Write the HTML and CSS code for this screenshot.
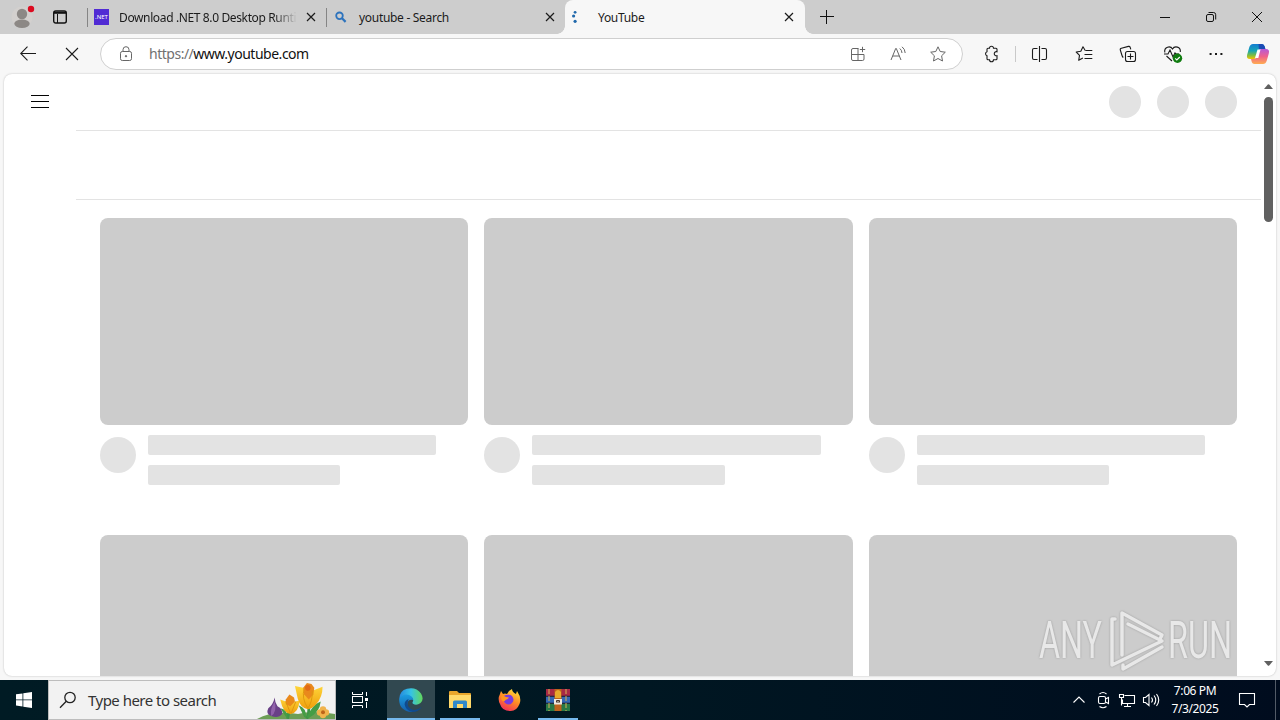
FILE: index.html
```html
<!doctype html>
<html lang="en">
  <head>
    <meta charset="UTF-8" />
    <meta name="viewport" content="width=device-width, initial-scale=1.0" />
    <title>YouTube</title>
    <link rel="stylesheet" href="styles.css">
  </head>
  <body>
    <div class="desktop">
      <header class="tabbar">
        <div class="profile">
          <svg width="44" height="34" viewBox="0 0 44 34">
            <circle cx="22" cy="17" r="10.5" fill="#d3d0ce" />
            <circle cx="22" cy="14" r="5.2" fill="#8c8885" />
            <ellipse cx="22" cy="23.8" rx="7.7" ry="4.2" fill="#8c8885" />
            <circle cx="31" cy="9" r="3.2" fill="#dc0b20" />
          </svg>
        </div>
        <div class="tab-actions">
          <svg width="16" height="16" viewBox="0 0 16 16" fill="none" stroke="#111" stroke-width="1.4">
            <rect x="1.7" y="2" width="12.6" height="12" rx="2" />
            <path d="M2 3.8h12" stroke-width="2" />
            <path d="M5.5 5v9" stroke-width="1" />
          </svg>
        </div>
        <div class="tab first">
          <div class="net-icon">.NET</div>
          <span class="tab-title fade">Download .NET 8.0 Desktop Runti</span>
          <svg class="close" viewBox="0 0 10 10"><path d="M1 1l8 8M9 1l-8 8" /></svg>
        </div>
        <div class="tab second">
          <svg class="favicon" viewBox="0 0 16 16" fill="none" stroke="#2d73bd" stroke-width="1.8">
            <circle cx="6.5" cy="6.8" r="3.3" />
            <path d="M9 9.300l3.600 3.600" stroke-width="2.2" />
          </svg>
          <span class="tab-title">youtube - Search</span>
          <svg class="close" viewBox="0 0 10 10"><path d="M1 1l8 8M9 1l-8 8" /></svg>
        </div>
        <div class="tab active">
          <svg class="favicon" viewBox="0 0 16 16" fill="#2169ac">
            <circle cx="4.1" cy="3.3" r="1.4" />
            <circle cx="2.6" cy="7" r="1.6" />
            <circle cx="4.1" cy="12.3" r="1.6" />
          </svg>
          <span class="tab-title">YouTube</span>
          <svg class="close" viewBox="0 0 10 10"><path d="M1 1l8 8M9 1l-8 8" /></svg>
        </div>
        <div class="new-tab">
          <svg width="14" height="14" viewBox="0 0 14 14" stroke="#111" stroke-width="1"><path d="M6.500 0v14M0 6.500h14" /></svg>
        </div>
        <div class="window-controls">
          <svg viewBox="0 0 46 34"><path d="M18 17.5h10" /></svg>
          <svg viewBox="0 0 46 34">
            <rect x="18.5" y="14.5" width="7" height="7" rx="1.5" />
            <path d="M20.500 12.500h5a2.200 2.200 0 0 1 2.200 2.200v4.800" />
          </svg>
          <svg viewBox="0 0 46 34"><path d="M18 12l10 10M28 12l-10 10" /></svg>
        </div>
      </header>

      <div class="toolbar">
        <div class="tool"><svg width="16" height="16" viewBox="0 0 16 16"><path d="M16 7.500H.8M7.500 .7L.7 7.500l6.800 6.800" /></svg></div>
        <div class="tool"><svg width="14" height="14" viewBox="0 0 14 14"><path d="M1 1l12 12M13 1L1 13" /></svg></div>
        <div class="address">
          <svg class="lock" width="14" height="16" viewBox="0 0 14 16">
            <rect x="1.5" y="5.5" width="11" height="9" rx="1.8" />
            <path d="M4 5.500V3.700a3 3 0 0 1 6 0v1.800" />
            <circle cx="7" cy="10.2" r=".7" fill="#555" />
          </svg>
          <span class="url"><span class="scheme">https://</span>www.youtube.com</span>
          <div class="address-icon">
            <svg width="16" height="16" viewBox="0 0 16 16">
              <path d="M8.500 2.500H3A1.500 1.500 0 0 0 1.500 4v9A1.500 1.500 0 0 0 3 14.500h9.500A1.500 1.500 0 0 0 14 13V8.500H1.500M8 2.500v12M12.500.8v5.400M9.800 3.500h5.400" />
            </svg>
          </div>
          <div class="address-icon">
            <svg width="16" height="16" viewBox="0 0 16 16">
              <path d="M1 14L5.700 2.500h.6L11 14M2.800 10h6.500M9.800 2.500q2 1.500 2.200 4.500M12 .8q3 2.200 3.200 6.200" />
            </svg>
          </div>
          <div class="address-icon">
            <svg width="18" height="18" viewBox="0 0 18 18">
              <path d="M9 1.800l2.200 4.700 5.100.7-3.700 3.600.9 5.200L9 13.500 4.500 16l.9-5.200L1.700 7.200l5.100-.7z" stroke-linejoin="round" />
            </svg>
          </div>
        </div>
        <div class="tool extensions">
          <svg width="18" height="18" viewBox="0 0 18 18">
            <path d="M5.500 3.500H7a2 2 0 0 1 4 0h2.500q1 0 1 1V7a2.100 2.100 0 1 0 0 4v3q0 1-1 1H11a2 2 0 0 1-4 0H5.500q-1 0-1-1v-3a2.100 2.100 0 0 1 0-4V4.500q0-1 1-1z" transform="translate(-.5 -.3)" />
          </svg>
        </div>
        <div class="divider"></div>
        <div class="tool">
          <svg width="18" height="18" viewBox="0 0 18 18">
            <path d="M6.500 3.500H3Q1.500 3.500 1.500 5v8q0 1.500 1.500 1.500h3.500M10.500 3.500H14q1.500 0 1.500 1.500v8q0 1.500-1.500 1.500h-3.500M8.500 1v16" />
          </svg>
        </div>
        <div class="tool">
          <svg width="18" height="18" viewBox="0 0 18 18">
            <path d="M10.200 5.500L8 1.800 5.800 6.300 1.200 7l3.300 3.300-.8 5 4.200-2.200M10.500 5.500h6.800M9.500 9.500h7.800M9.500 13.500h7.800" stroke-linejoin="round" />
          </svg>
        </div>
        <div class="tool">
          <svg width="18" height="18" viewBox="0 0 18 18">
            <path d="M4.300 12.500Q3.500 12 3 10.500L1.300 5Q.9 3.600 2.400 3.200l7-1.800q1.400-.3 1.800 1l.6 2" />
            <rect x="6.500" y="6.500" width="10" height="10" rx="2" />
            <path d="M11.500 8.500v6M8.500 11.500h6" />
          </svg>
        </div>
        <div class="tool health">
          <svg width="20" height="20" viewBox="0 0 20 20">
            <path d="M1.800 8.500C.8 2.500 7.500 1.500 9.500 5c2-3.500 8.500-2.500 7.800 3M3.500 12l5.500 5M1 10h4l2-4 3 7 2-4 1 1h3" />
            <circle cx="14.5" cy="14.3" r="4.7" fill="#107c10" stroke="none" />
            <path d="M12.200 14.400l1.600 1.600 3-3" stroke="#fff" />
          </svg>
        </div>
        <div class="tool">
          <svg width="16" height="16" viewBox="0 0 16 16"><path d="M1.600 8h2M7 8h2M12.400 8h2" stroke-width="2" /></svg>
        </div>
        <div class="tool copilot">
          <svg width="24" height="22" viewBox="0 0 24 22">
            <defs>
              <linearGradient id="cool" x1="0" y1="0" x2="0" y2="1">
                <stop offset="0" stop-color="#147bd1" />
                <stop offset=".45" stop-color="#16a6b5" />
                <stop offset=".75" stop-color="#7cbd42" />
                <stop offset="1" stop-color="#f5c400" />
              </linearGradient>
              <linearGradient id="warm" x1="0" y1="0" x2="0" y2="1">
                <stop offset="0" stop-color="#b55ad8" />
                <stop offset=".5" stop-color="#f0628c" />
                <stop offset="1" stop-color="#ffad50" />
              </linearGradient>
            </defs>
            <path d="M7 1h9q2 0 2.700 2.500L19 6h-4q-2 0-2.600 2L10.500 14Q9.800 16 8 16H4Q0 16 1.200 11.500l2-7Q4.200 1 7 1z" fill="url(#cool)" stroke="none" />
            <path d="M12.500 1H16q2 0 2.700 2.500L19.500 6H15q-1.400 0-2 1z" fill="#1b4bb4" stroke="none" />
            <path d="M17 21H8.500Q6 21 5.500 18L5 16h3q2 0 2.600-2L12.500 8q.6-2 2.500-2h5q4 0 2.800 4.500l-2 7Q19.800 21 17 21z" fill="url(#warm)" stroke="none" />
            <path d="M11.500 6.500h3L12.300 15H9z" fill="#fff" stroke="none" />
          </svg>
        </div>
      </div>

      <main class="page">
        <div class="content">
          <div class="masthead">
            <svg width="18" height="14" viewBox="0 0 18 14" stroke="#030303" stroke-width="1"><path d="M0 .5h18M0 6.500h18M0 12.500h18" /></svg>
            <div class="masthead-buttons">
              <div class="circle"></div>
              <div class="circle"></div>
              <div class="circle"></div>
            </div>
          </div>
          <div class="chips"></div>
          <div class="grid">
            <div class="video">
              <div class="thumbnail"></div>
              <div class="details">
                <div class="avatar"></div>
                <div class="lines"><div class="line"></div><div class="line short"></div></div>
              </div>
            </div>
            <div class="video">
              <div class="thumbnail"></div>
              <div class="details">
                <div class="avatar"></div>
                <div class="lines"><div class="line"></div><div class="line short"></div></div>
              </div>
            </div>
            <div class="video">
              <div class="thumbnail"></div>
              <div class="details">
                <div class="avatar"></div>
                <div class="lines"><div class="line"></div><div class="line short"></div></div>
              </div>
            </div>
            <div class="video"><div class="thumbnail"></div></div>
            <div class="video"><div class="thumbnail"></div></div>
            <div class="video"><div class="thumbnail"></div></div>
          </div>
        </div>
        <div class="scrollbar">
          <svg width="9" height="5" viewBox="0 0 9 5"><path d="M0 5l3.800-4.500q.7-.7 1.400 0L9 5z" fill="#606060" /></svg>
          <div class="thumb"></div>
          <svg class="down" width="9" height="5" viewBox="0 0 9 5"><path d="M0 0h9L5.200 4.500q-.7.700-1.400 0z" fill="#606060" /></svg>
        </div>
      </main>

      <footer class="taskbar">
        <div class="start">
          <svg width="16" height="16" viewBox="0 0 16 16" fill="#fff">
            <path d="M0 2.300l6.500-.9v6.100H0zM7.300 1.200L16 0v7.500H7.300zM0 8.300h6.500v6.200L0 13.600zM7.300 8.300H16V16l-8.700-1.300z" />
          </svg>
        </div>
        <div class="search">
          <svg width="18" height="18" viewBox="0 0 18 18" fill="none" stroke="#222" stroke-width="1.3">
            <circle cx="11" cy="6.5" r="5.2" />
            <path d="M7.300 10.300L1 16.700" />
          </svg>
          <span>Type here to search</span>
          <svg class="flowers" width="80" height="38" viewBox="0 0 80 38">
            <defs>
              <linearGradient id="petal" x1="0" y1="0" x2="0" y2="1">
                <stop offset="0" stop-color="#ffd83b" />
                <stop offset="1" stop-color="#ef9e0c" />
              </linearGradient>
            </defs>
            <path d="M2 38Q18 29 43 33Q57 29 80 33v5z" fill="#6c9e55" />
            <g transform="translate(5 1) scale(.92 .97)">
              <path d="M30 38Q33 28 28 22M51 38Q55 27 52 17" fill="none" stroke="#3f9547" stroke-width="3" />
              <path d="M51 36Q57 23 66 20Q65 31 53 37M48 36L42 24q9 3 8 13M29 37l-7-10q8 1 8 10" fill="#459d46" />
              <path d="M16 16q-2 8-7 11-3 6 3 8 8 3 12-2 1-5-5-8-3-4-3-9z" fill="#694087" />
              <path d="M16 20q-5 7-4 15 7-4 4-15l3 14" fill="#9061aa" />
              <path d="M22 18l6 2 4-4 4 5 7-2q-1 13-10 14-8-1-11-15z" fill="url(#petal)" />
              <path d="M28 18l4-5 5 3 1 4-5 5-5-2z" fill="#e9891c" />
              <path d="M28 20l5 12M39 20l-5 12" stroke="#de950e" />
              <path d="M38 4l9 2 5-3 5 6 11-4q0 11-7 18-5 5-9 5-8-1-11-11z" fill="url(#petal)" />
              <path d="M47 6l4-5 5 1 3 4-1 7-5 5-5-5z" fill="#e9891c" />
              <path d="M48 7q-3 10 4 20M57 9q0 12-5 18" fill="none" stroke="#dd970d" />
              <circle cx="52" cy="6" r="3" fill="#e06a17" />
            </g>
            <g fill="#f0b34c">
              <circle cx="65" cy="31.500" r="3.200" /><circle cx="68" cy="28.500" r="3.200" />
              <circle cx="71" cy="31.500" r="3.200" /><circle cx="68" cy="34" r="3.200" />
            </g>
            <circle cx="68" cy="31.2" r="2" fill="#bd641a" />
          </svg>
        </div>
        <div class="task">
          <svg width="18" height="18" viewBox="0 0 18 18" fill="none" stroke="#fff" stroke-width="1">
            <path d="M1.500 1v2.500h10V1M1.500 17v-2.500h10V17M15.500 1v4M15.500 11v6" />
            <rect x="1.5" y="5.5" width="10" height="6" />
            <path d="M14 7h3v3h-3z" fill="#fff" stroke="none" />
          </svg>
        </div>
        <div class="task edge open">
          <svg width="24" height="24" viewBox="0 0 24 24">
            <defs>
              <linearGradient id="wave" x1="0" y1="0" x2="1" y2="0">
                <stop offset="0" stop-color="#2588df" />
                <stop offset=".5" stop-color="#36c3e6" />
                <stop offset="1" stop-color="#62d85b" />
              </linearGradient>
              <linearGradient id="deep" x1="0" y1="0" x2="0" y2="1">
                <stop offset="0" stop-color="#1b9de2" />
                <stop offset="1" stop-color="#155da9" />
              </linearGradient>
            </defs>
            <path d="M.2 11Q.5 2.500 8 .7q9-2.200 14 4.800 3.500 6-.5 9.500-4 3-7.500.8-1-.7-.1-2.200Q15 11 12 9 6 5.500.2 11z" fill="url(#wave)" />
            <path d="M.2 11Q4 5 10 7q4 1.500 4.300 5-6-1-6 4.500 0 5 6.500 7.200Q8 25 3.300 20.300-.1 16.500.2 11z" fill="url(#deep)" />
            <path d="M9.600 11q-3 7 2.500 10 4.700 2.500 10.500-2-3 5-9 5-7-1.500-8-7.500-.1-4 4-5.500z" fill="#104a8d" />
          </svg>
        </div>
        <div class="task open">
          <svg width="22" height="20" viewBox="0 0 22 20">
            <path d="M0 2q0-1 1-1h7l2 2h11q1 0 1 1v14H0z" fill="#e9a62b" />
            <path d="M0 5h22v12q0 1-1 1H0z" fill="#ffd96a" />
            <path d="M4 18v-6q0-1.500 1.500-1.500h11q1.500 0 1.500 1.500v6h-4v-4H8v4z" fill="#3189c9" />
          </svg>
        </div>
        <div class="task">
          <svg width="24" height="24" viewBox="0 0 24 24">
            <defs>
              <linearGradient id="fire" x1=".8" y1="0" x2=".3" y2="1">
                <stop offset="0" stop-color="#ffe33b" />
                <stop offset=".5" stop-color="#ff8a25" />
                <stop offset="1" stop-color="#f22c5b" />
              </linearGradient>
            </defs>
            <path d="M3 6l1-3 2 3q2-1 4 0l2-3 3-2q0 3 4 5l1-3q5 7 2.500 13-3 7.500-9.500 7-8 0-10-7Q.3 11 3 6z" fill="url(#fire)" />
            <path d="M9 7q4-1 6 1 3 4 0 7-3 3-7 0-2-2-1-4 1 1 3 0L7 9q0-2 2-2z" fill="#783be0" />
            <path d="M5 7l4 2 3 .5q-1 2-3 2-1 2-3 2Q3 11 5 7z" fill="#ff951f" />
          </svg>
        </div>
        <div class="task open">
          <svg width="24" height="22" viewBox="0 0 24 22">
            <path d="M0 0h24v7H0z" fill="#a82a45" />
            <path d="M0 7.500h24V14H0z" fill="#3467b4" />
            <path d="M0 14.500h24V22H0z" fill="#287947" />
            <path d="M0 7.200h24M0 14.200h24" stroke="#26233a" />
            <path d="M3 0v22M20 0v22" stroke="#d8b456" stroke-dasharray="5 2" />
            <path d="M8.500 0h7v22h-7z" fill="#be631d" />
            <path d="M9 3q3-4 6 0v6H9z" fill="#e7a92c" />
            <rect x="8" y="10" width="8" height="5.5" fill="#efe9df" />
            <path d="M10.500 13.500v-2h3v2M12 11v3" fill="none" stroke="#49372b" />
          </svg>
        </div>

        <div class="tray">
          <svg viewBox="0 0 24 24"><path d="M6.500 14.500L12 9l5.500 5.500" /></svg>
          <svg viewBox="0 0 24 24">
            <rect x="7.5" y="8.5" width="7" height="7" rx="1.5" />
            <path d="M14.500 11l3-1.500v6l-3-1.500M8.500 6q3.500-3 7 0M8.500 18.500q3.500 2.500 7 0" />
          </svg>
          <svg viewBox="0 0 24 24">
            <path d="M9.500 7.500h10v8h-12v-4M12.500 15.500v3M9 18.500h7M4.500 6.500h4v3h-4zM6.500 9.500v8" />
          </svg>
          <svg viewBox="0 0 24 24">
            <path d="M4.500 9.500h2l3.500-3v11l-3.500-3h-2zM12.500 9.500q2 2.500 0 5M15 7.500q3.500 4.500 0 9M17.500 6q4.500 6 0 12" />
          </svg>
        </div>
        <div class="clock">
          <span>7:06 PM</span>
          <span>7/3/2025</span>
        </div>
        <div class="notifications">
          <svg width="18" height="18" viewBox="0 0 18 18" fill="none" stroke="#fff" stroke-width="1.1"><path d="M1.500 2.500h15v11h-5L9 16l-2.500-2.500h-5z" /></svg>
        </div>
        <div class="show-desktop"></div>
      </footer>

      <svg class="watermark" width="220" height="76" viewBox="0 0 220 76">
        <g fill="#fff">
          <text x="3" y="53" textLength="63" lengthAdjust="spacingAndGlyphs">ANY</text>
          <text x="132" y="53" textLength="64" lengthAdjust="spacingAndGlyphs">RUN</text>
        </g>
        <g fill="none" stroke="#fff" stroke-width="3.5" stroke-linejoin="round" stroke-linecap="round">
          <path d="M79 14h-3v46l50-24-34-17" />
          <path d="M86 50V8l40 22-2 4" />
          <path d="M87 60v4l39-22" />
        </g>
      </svg>
    </div>
  </body>
</html>
```

FILE: styles.css
```css
* {
  margin: 0;
  padding: 0;
  box-sizing: border-box;
}

body {
  font-family: 'Noto Sans', 'Open Sans', sans-serif;
  overflow: hidden;
}

svg {
  display: block;
  flex-shrink: 0;
}

.desktop {
  width: 1280px;
  height: 720px;
  position: relative;
  display: flex;
  flex-direction: column;
  background: #f7f7f7;
  overflow: hidden;
}

/* Tabs */
.tabbar {
  height: 34px;
  display: flex;
  background: #cdcdcd;
}

.profile {
  width: 44px;
}

.tab-actions {
  width: 43px;
  padding: 9px 0 0 8px;
}

.tab {
  display: flex;
  align-items: center;
  height: 34px;
  font-size: 12px;
  color: #1b1b1b;
  position: relative;
}

.tab.first,
.tab.second {
  width: 239px;
  padding: 0 10px 0 7px;
}

.tab.first::before,
.tab.second::before {
  content: '';
  position: absolute;
  left: 0;
  top: 8px;
  width: 1px;
  height: 19px;
  background: #858585;
}

.tab.active {
  width: 240px;
  padding: 0 11px 0 6px;
  background: #f7f7f7;
  border-radius: 8px 8px 0 0;
}

.tab.active::before,
.tab.active::after {
  content: '';
  position: absolute;
  bottom: 0;
  width: 8px;
  height: 8px;
}

.tab.active::before {
  left: -8px;
  background: radial-gradient(circle at 0 0, transparent 7.5px, #f7f7f7 8px);
}

.tab.active::after {
  right: -8px;
  background: radial-gradient(circle at 100% 0, transparent 7.5px, #f7f7f7 8px);
}

.favicon,
.net-icon {
  width: 16px;
  height: 16px;
}

.net-icon {
  background: #512bd4;
  color: #fff;
  font-size: 6px;
  line-height: 16px;
  text-align: center;
}

.tab-title {
  flex: 1;
  margin-left: 10px;
  white-space: nowrap;
  letter-spacing: -0.3px;
}

.active .tab-title {
  margin-left: 11px;
}

.fade {
  flex: 0 0 178px;
  margin-right: 9px;
  letter-spacing: -0.37px;
  mask-image: linear-gradient(90deg, #000 155px, transparent);
}

.close {
  width: 10px;
  height: 10px;
  stroke: #1b1b1b;
  stroke-width: 1.2;
}

.new-tab {
  padding: 10px 0 0 15px;
}

.window-controls {
  display: flex;
  margin-left: auto;
}

.window-controls svg {
  width: 46px;
  height: 34px;
  fill: none;
  stroke: #111;
  stroke-width: 1;
}

/* Toolbar */
.toolbar {
  height: 40px;
  display: flex;
  align-items: center;
}

.tool {
  width: 44px;
  height: 40px;
  display: flex;
  align-items: center;
  justify-content: center;
}

.tool svg {
  fill: none;
  stroke: #1b1b1b;
  stroke-width: 1.1;
}

.tool:first-child {
  margin-left: 6px;
}

.address {
  width: 863px;
  height: 32px;
  margin-left: 6px;
  padding: 0 4px 0 18px;
  display: flex;
  align-items: center;
  background: #fff;
  border: 1px solid #cfcfcf;
  border-radius: 16px;
}

.address svg {
  fill: none;
  stroke: #666;
  stroke-width: 1;
}

.url {
  flex: 1;
  margin-left: 16px;
  padding-bottom: 1px;
  font-size: 14px;
  letter-spacing: -0.49px;
  color: #111;
}

.scheme {
  color: #717171;
}

.address-icon {
  width: 40px;
  display: flex;
  justify-content: center;
}

.extensions {
  margin-left: 7px;
}

.divider {
  width: 1px;
  height: 16px;
  margin: 0 2px 0 1px;
  background: #c9c9c9;
}

.health {
  padding-left: 2px;
}

.copilot {
  width: 40px;
}

/* Page */
.page {
  width: 1272px;
  height: 602px;
  margin-left: 4px;
  display: flex;
  background: #fff;
  border-radius: 8px;
  box-shadow: 0 0 2px rgba(0, 0, 0, 0.25);
  overflow: hidden;
}

.content {
  width: 1257px;
}

.masthead {
  height: 56px;
  padding: 0 24px 0 27px;
  display: flex;
  align-items: center;
  justify-content: space-between;
}

.masthead-buttons {
  display: flex;
  gap: 16px;
}

.circle {
  width: 32px;
  height: 32px;
  border-radius: 50%;
  background: #e3e3e3;
}

.chips {
  height: 70px;
  margin-left: 72px;
  border-top: 1px solid #e3e3e3;
  border-bottom: 1px solid #e3e3e3;
}

.grid {
  display: grid;
  grid-template-columns: repeat(3, 1fr);
  column-gap: 16px;
  row-gap: 50px;
  padding: 18px 24px 0 96px;
}

.thumbnail {
  height: 207px;
  border-radius: 8px;
  background: #ccc;
}

.details {
  display: flex;
  gap: 12px;
  margin-top: 10px;
}

.avatar {
  width: 36px;
  height: 36px;
  margin-top: 2px;
  border-radius: 50%;
  background: #e3e3e3;
}

.lines {
  flex: 1;
  display: flex;
  flex-direction: column;
  gap: 10px;
}

.line {
  width: 90%;
  height: 20px;
  border-radius: 2px;
  background: #e3e3e3;
}

.line.short {
  width: 60%;
}

.scrollbar {
  width: 15px;
  display: flex;
  flex-direction: column;
  align-items: center;
  padding: 10px 0;
}

.thumb {
  width: 9px;
  height: 125px;
  margin-top: 8px;
  border-radius: 5px;
  background: #606060;
}

.down {
  margin-top: auto;
}

/* Taskbar */
.taskbar {
  height: 40px;
  margin-top: 4px;
  display: flex;
  background: linear-gradient(90deg, #001b24 0%, #001722 50%, #000c1e 100%);
  color: #fff;
}

.start,
.task {
  width: 48px;
  display: flex;
  align-items: center;
  justify-content: center;
}

.search {
  width: 288px;
  display: flex;
  align-items: center;
  padding-left: 10px;
  background: #f2f2f2;
  border: 1px solid #bdbdbd;
  color: #333;
  font-size: 15px;
}

.search span {
  margin-left: 11px;
  letter-spacing: -0.52px;
}

.flowers {
  margin-left: auto;
}

.task + .task {
  margin-left: 1px;
}

.task.edge {
  margin-left: 3px;
  background-color: #314850;
}

.task.open {
  background-image: linear-gradient(#76b9ed, #76b9ed);
  background-size: 40px 2px;
  background-position: center bottom;
  background-repeat: no-repeat;
}

.task.edge.open {
  background-size: 48px 2px;
}

.tray {
  display: flex;
  align-items: center;
  margin-left: auto;
}

.tray svg {
  width: 24px;
  height: 24px;
  fill: none;
  stroke: #fff;
  stroke-width: 1.1;
}

.clock {
  width: 64px;
  padding-top: 2px;
  display: flex;
  flex-direction: column;
  align-items: center;
  font-size: 12px;
  line-height: 18px;
  letter-spacing: -0.4px;
}

.notifications {
  width: 40px;
  display: flex;
  align-items: center;
  justify-content: center;
}

.show-desktop {
  width: 5px;
  margin-left: 8px;
  border-left: 1px solid #525b67;
}

.watermark {
  position: absolute;
  left: 1036px;
  top: 605px;
  opacity: 0.55;
  font-family: Roboto, sans-serif;
  font-size: 51px;
  filter: drop-shadow(0 0 1px #777);
}
```
